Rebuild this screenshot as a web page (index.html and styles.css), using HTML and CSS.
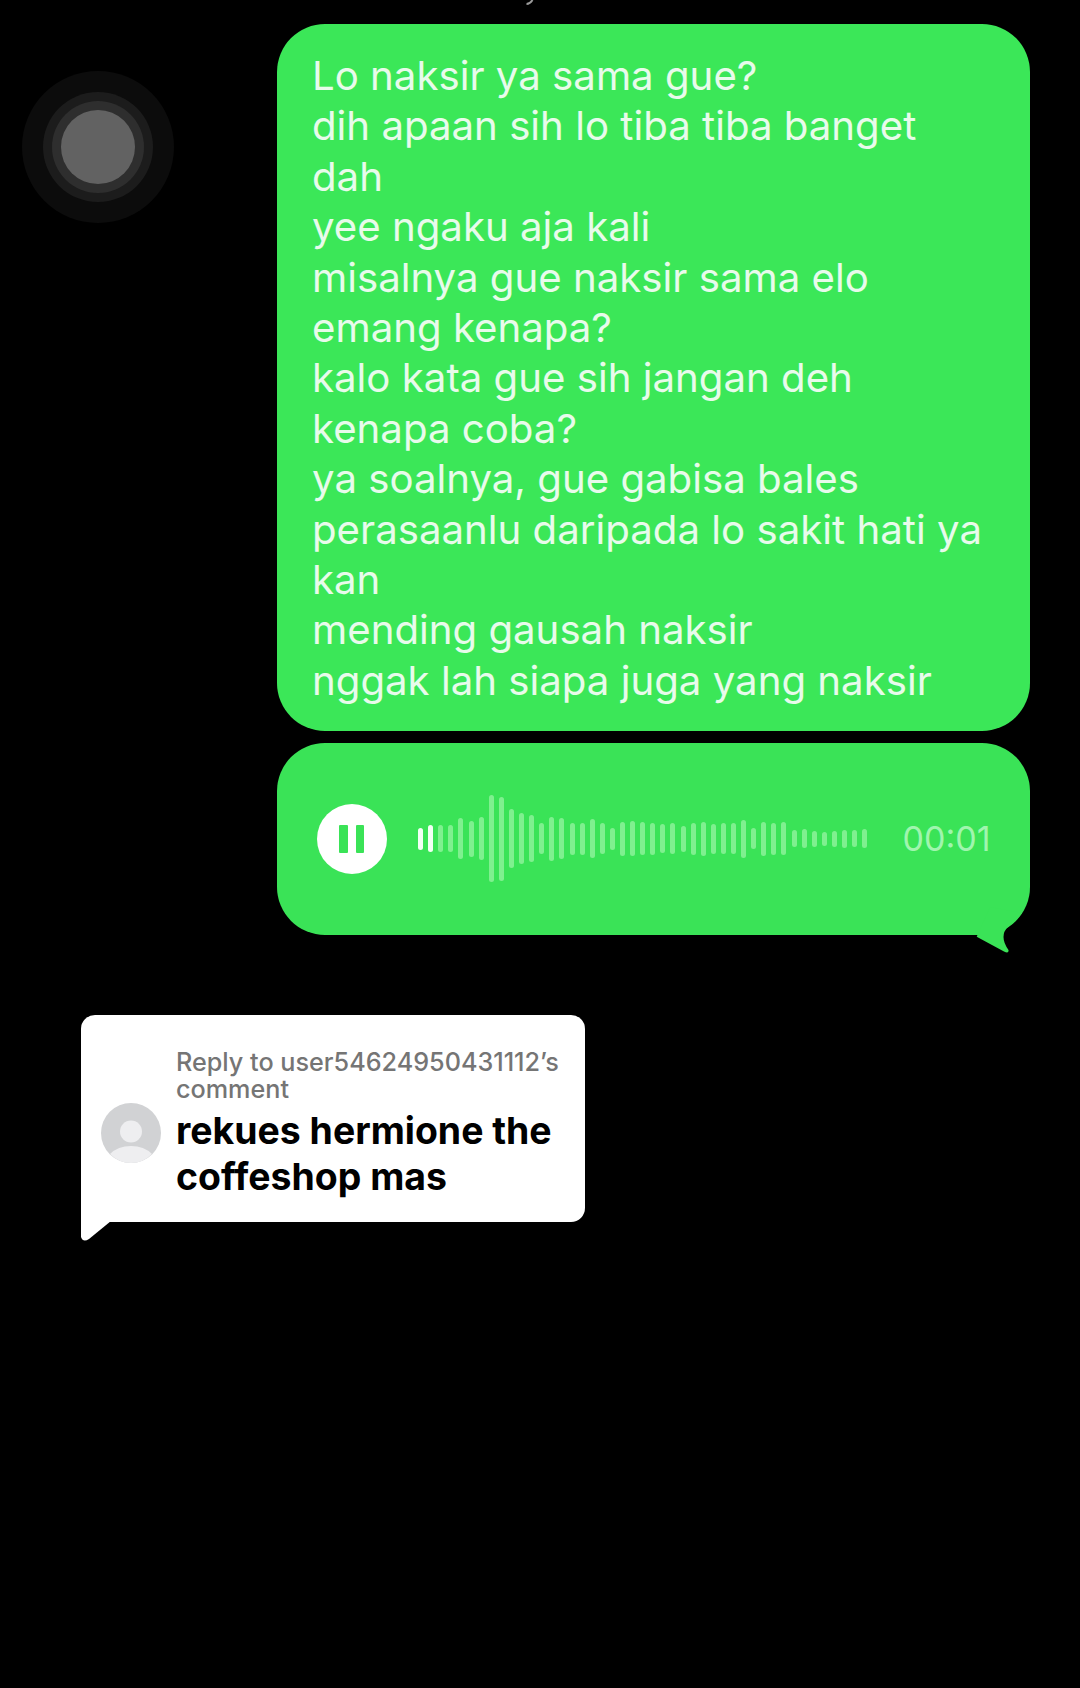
FILE: index.html
```html
<!DOCTYPE html>
<html lang="id">
<head>
<meta charset="utf-8">
<title>Chat</title>
<link rel="stylesheet" href="styles.css">
</head>
<body>
<svg class="top-mark" width="10" height="5" viewBox="0 0 10 5"><path d="M1.5 4 Q5 4 7.5 0" fill="none" stroke="#9a9a9a" stroke-width="2"/></svg>
<div class="touch"><div class="touch-mid"><div class="touch-inner"><div class="touch-core"></div></div></div></div>
<main class="page">
  <section class="thread">
    <div class="bubble text-bubble">
      <p class="line">Lo naksir ya sama gue?</p>
      <p class="line">dih apaan sih lo tiba tiba banget dah</p>
      <p class="line">yee ngaku aja kali</p>
      <p class="line">misalnya gue naksir sama elo</p>
      <p class="line">emang kenapa?</p>
      <p class="line">kalo kata gue sih jangan deh</p>
      <p class="line">kenapa coba?</p>
      <p class="line">ya soalnya, gue gabisa bales perasaanlu daripada lo sakit hati ya kan</p>
      <p class="line">mending gausah naksir</p>
      <p class="line">nggak lah siapa juga yang naksir</p>
    </div>
    <div class="bubble voice-bubble">
      <div class="pause"><span class="pause-bar"></span><span class="pause-bar"></span></div>
      <div class="wave">
        <i class="bar done" style="height:22px"></i><i class="bar done" style="height:27px"></i><i class="bar" style="height:27px"></i><i class="bar" style="height:27px"></i><i class="bar" style="height:41px"></i><i class="bar" style="height:36px"></i><i class="bar" style="height:43px"></i><i class="bar" style="height:87px"></i><i class="bar" style="height:84px"></i><i class="bar" style="height:59px"></i><i class="bar" style="height:51px"></i><i class="bar" style="height:47px"></i><i class="bar" style="height:31px"></i><i class="bar" style="height:44px"></i><i class="bar" style="height:41px"></i><i class="bar" style="height:32px"></i><i class="bar" style="height:32px"></i><i class="bar" style="height:39px"></i><i class="bar" style="height:31px"></i><i class="bar" style="height:22px"></i><i class="bar" style="height:34px"></i><i class="bar" style="height:35px"></i><i class="bar" style="height:33px"></i><i class="bar" style="height:32px"></i><i class="bar" style="height:29px"></i><i class="bar" style="height:31px"></i><i class="bar" style="height:26px"></i><i class="bar" style="height:32px"></i><i class="bar" style="height:34px"></i><i class="bar" style="height:30px"></i><i class="bar" style="height:31px"></i><i class="bar" style="height:31px"></i><i class="bar" style="height:38px"></i><i class="bar" style="height:21px"></i><i class="bar" style="height:34px"></i><i class="bar" style="height:32px"></i><i class="bar" style="height:33px"></i><i class="bar" style="height:17px"></i><i class="bar" style="height:19px"></i><i class="bar" style="height:16px"></i><i class="bar" style="height:14px"></i><i class="bar" style="height:16px"></i><i class="bar" style="height:18px"></i><i class="bar" style="height:17px"></i><i class="bar" style="height:19px"></i>
      </div>
      <span class="time">00:01</span>
      <svg class="tail" width="60" height="60" viewBox="0 0 60 60"><path d="M6.7 39.7 L34 54.5 Q39 57 38.5 53 Q33.5 46 33.5 40 Q33.5 34 38 30 Q46 24 52 16 L20 10 Z"/></svg>
    </div>
  </section>
  <section class="reply">
    <div class="avatar">
      <svg width="60" height="60" viewBox="0 0 60 60"><circle cx="30" cy="30" r="30" fill="#d1d2d4"/><circle cx="30" cy="28.5" r="11" fill="#eeeef0"/><path d="M9 51 Q17 43 30 43 Q43 43 51 51 Q42 60 30 60 Q18 60 9 51 Z" fill="#eeeef0"/></svg>
    </div>
    <div class="reply-body">
      <p class="reply-label">Reply to user54624950431112’s comment</p>
      <p class="reply-text">rekues hermione the coffeshop mas</p>
    </div>
    <svg class="reply-tail" width="34" height="24" viewBox="0 0 34 24"><path d="M0 0 H30 L8 18 Q2 22 0 16 Z"/></svg>
  </section>
</main>
</body>
</html>
```
FILE: styles.css
```css
* { box-sizing: border-box; }
html, body { margin: 0; background: #000; }
body { width: 1080px; height: 1688px; overflow: hidden; position: relative; font-family: Inter, "Liberation Sans", sans-serif; }
p { margin: 0; }

.top-mark { position: absolute; left: 525px; top: 0; }

.touch { position: absolute; left: 22px; top: 71px; width: 152px; height: 152px; border-radius: 50%; background: #0c0c0c; display: flex; align-items: center; justify-content: center; }
.touch-mid { width: 110px; height: 110px; border-radius: 50%; background: #1c1c1c; display: flex; align-items: center; justify-content: center; }
.touch-inner { width: 92px; height: 92px; border-radius: 50%; background: #2e2e2e; display: flex; align-items: center; justify-content: center; }
.touch-core { width: 74px; height: 74px; border-radius: 50%; background: #626262; }

.page { padding-top: 24px; display: flex; flex-direction: column; }
.thread { display: flex; flex-direction: column; align-items: flex-end; gap: 11.5px; padding-right: 50.5px; }
.bubble { width: 753px; background: #3be758; border-radius: 48px; color: #e8fbeb; }
.text-bubble { padding: 27px 39px 25px 35.5px; font-size: 40.2px; line-height: 50.4px; }
.voice-bubble { height: 192px; position: relative; display: flex; align-items: center; padding: 0 39px 0 40px; background: #3ae357; }
.pause { width: 70px; height: 70px; border-radius: 50%; background: #fff; display: flex; align-items: center; justify-content: center; gap: 8px; flex: none; }
.pause-bar { width: 8.5px; height: 28px; background: #3ae357; border-radius: 1px; }
.wave { display: flex; align-items: center; margin-left: 31.6px; gap: 5.1px; flex: none; }
.bar { display: block; width: 5px; border-radius: 2.5px; background: #7ff08f; flex: none; }
.bar.done { background: #f3fff5; }
.time { margin-left: auto; font-size: 34px; color: #a0f5ae; }
.tail { position: absolute; right: 0; bottom: -22px; fill: #3ae357; }

.reply { position: relative; margin: 80px 0 0 81px; width: 504px; height: 207px; background: #fff; border-radius: 14px 14px 14px 0; display: flex; align-items: flex-start; padding: 34px 24px 0 20px; }
.avatar { flex: none; width: 60px; height: 60px; margin-top: 54px; }
.avatar svg { display: block; }
.reply-body { margin-left: 15px; }
.reply-label { font-size: 25.2px; line-height: 27.5px; font-weight: 500; color: #757575; }
.reply-text { margin-top: 4px; font-size: 37.4px; line-height: 46px; font-weight: 700; color: #000; }
.reply-tail { position: absolute; left: 0; top: 100%; margin-top: -1px; fill: #fff; }
```
